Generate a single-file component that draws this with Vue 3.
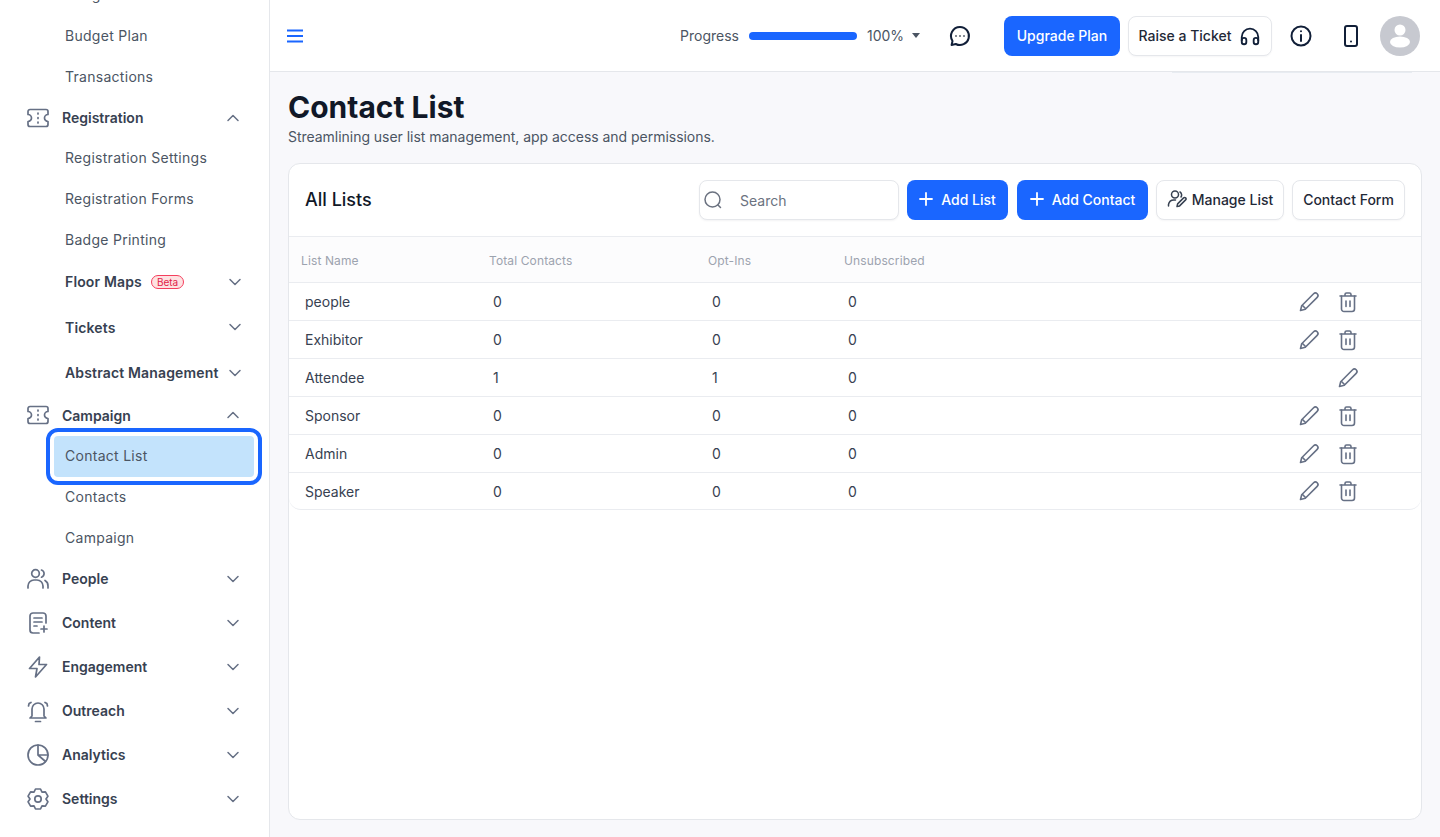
<template>
  <div class="layout">
    <aside class="sidebar">
      <nav class="nav">
        <a class="subItem">Budget Overview</a>
        <a class="subItem">Budget Plan</a>
        <a class="subItem">Transactions</a>

        <template v-for="group in groups" :key="group.label">
          <div class="groupRow">
            <svg class="groupIcon" viewBox="0 0 24 24" v-html="icons[group.icon]"></svg>
            <span class="groupLabel">{{ group.label }}</span>
            <svg class="chevron" :class="{ open: group.items }" viewBox="0 0 16 16">
              <path d="M3 5.500l5 5 5-5" />
            </svg>
          </div>
          <div v-if="group.items" class="subList">
            <template v-for="item in group.items" :key="item.label">
              <div v-if="item.nested" class="nestedRow">
                <span class="nestedLabel">{{ item.label }}</span>
                <span v-if="item.beta" class="beta">Beta</span>
                <svg class="chevron nestedChevron" viewBox="0 0 16 16">
                  <path d="M3 5.500l5 5 5-5" />
                </svg>
              </div>
              <a v-else class="subItem" :class="{ active: item.active }">{{ item.label }}</a>
            </template>
          </div>
        </template>
      </nav>
    </aside>

    <div class="main">
      <header class="topbar">
        <svg class="burger" viewBox="0 0 16 14">
          <path d="M0 1.500h16M0 7h16M0 12.500h16" />
        </svg>
        <div class="topRight">
          <span class="progressLabel">Progress</span>
          <div class="progressBar"></div>
          <span class="progressLabel percent">100%</span>
          <span class="caret"></span>
          <svg class="topIcon chat" viewBox="0 0 24 24">
            <path d="M12 3a9 9 0 1 1-4.200 17L3.600 21l.9-4A9 9 0 0 1 12 3z" />
            <path class="dots" d="M8 12h.01M12 12h.01M16 12h.01" />
          </svg>
          <button class="btn primary upgrade">Upgrade Plan</button>
          <button class="btn outline ticket">
            Raise a Ticket
            <svg class="headset" viewBox="0 0 24 24">
              <path d="M3 17v-4a9 9 0 0 1 18 0v4" />
              <rect x="3" y="14" width="5" height="7" rx="2.500" />
              <rect x="16" y="14" width="5" height="7" rx="2.500" />
            </svg>
          </button>
          <svg class="topIcon info" viewBox="0 0 24 24">
            <circle cx="12" cy="12" r="9.500" />
            <path d="M12 11v6M12 7.200v.1" />
          </svg>
          <svg class="topIcon phone" viewBox="0 0 24 24">
            <rect x="6" y="2" width="12" height="20" rx="2" />
            <path d="M12 17.500v.1" />
          </svg>
          <div class="avatar">
            <svg viewBox="0 0 40 40">
              <circle cx="20" cy="14" r="5.500" />
              <ellipse cx="20" cy="26" rx="10" ry="5.500" />
            </svg>
          </div>
        </div>
        <div class="hiddenStrip"></div>
      </header>

      <main class="content">
        <h1 class="title">Contact List</h1>
        <p class="subtitle">Streamlining user list management, app access and permissions.</p>

        <section class="card">
          <div class="cardHead">
            <h2 class="cardTitle">All Lists</h2>
            <div class="tools">
              <label class="search">
                <svg class="searchIcon" viewBox="0 0 20 20">
                  <circle cx="9.500" cy="9.500" r="7.500" />
                  <path d="M15 15l2.500 2.500" />
                </svg>
                <span class="searchText">Search</span>
              </label>
              <button class="btn primary addList">
                <svg class="plus" viewBox="0 0 14 14"><path d="M7 1v12M1 7h12" /></svg>
                Add List
              </button>
              <button class="btn primary addContact">
                <svg class="plus" viewBox="0 0 14 14"><path d="M7 1v12M1 7h12" /></svg>
                Add Contact
              </button>
              <button class="btn outline manage">
                <svg class="manageIcon" viewBox="0 0 20 20">
                  <circle cx="8" cy="5.500" r="3.500" />
                  <path d="M1.500 17v-1.500A5.500 5.500 0 0 1 7 11h1.500" />
                  <path d="M13 3a3.500 3.500 0 0 1 1 5" />
                  <path d="M10 17.500l.6-2.600 6-6a1.400 1.400 0 0 1 2 2l-6 6z" />
                </svg>
                Manage List
              </button>
              <button class="btn outline form">Contact Form</button>
            </div>
          </div>

          <div class="tableHead">
            <span v-for="col in columns" :key="col">{{ col }}</span>
          </div>
          <div v-for="row in rows" :key="row.name" class="tableRow">
            <span>{{ row.name }}</span>
            <span>{{ row.total }}</span>
            <span>{{ row.optIns }}</span>
            <span>{{ row.unsub }}</span>
            <div class="actions">
              <svg class="action" viewBox="0 0 24 24">
                <path d="M3.500 20.500l1.200-4.800L16.600 3.800a2.400 2.400 0 0 1 3.600 3.600L8.300 19.300z" />
                <path d="M5.500 15.500l3 3" />
              </svg>
              <svg v-if="!row.locked" class="action" viewBox="0 0 24 24">
                <path d="M4 6h16M9 6V4.500A1.500 1.500 0 0 1 10.500 3h3A1.500 1.500 0 0 1 15 4.500V6" />
                <path d="M5.500 6v13a2.500 2.500 0 0 0 2.500 2.500h8a2.500 2.500 0 0 0 2.500-2.500V6" />
                <path d="M10 11v5.500M14 11v5.500" />
              </svg>
            </div>
          </div>
        </section>
      </main>
    </div>
  </div>
</template>

<script setup>
const icons = {
  ticket: '<path d="M4 3.500h16a2 2 0 0 1 2 2v3a3.500 3.500 0 0 0 0 7v3a2 2 0 0 1-2 2H4a2 2 0 0 1-2-2v-3a3.500 3.500 0 0 0 0-7v-3a2 2 0 0 1 2-2z"/><path d="M12 7v1M12 11.500v1M12 16v1"/>',
  people: '<circle cx="9.500" cy="6.500" r="3.800"/><path d="M2 21v-2a6 6 0 0 1 6-6h3a6 6 0 0 1 6 6v2"/><path d="M15.500 3a3.800 3.800 0 0 1 0 7.200M19 13.500a6 6 0 0 1 3 5.500v2"/>',
  content: '<path d="M20 12V5a3 3 0 0 0-3-3H7a3 3 0 0 0-3 3v14a3 3 0 0 0 3 3h6"/><path d="M8 7h8M8 11h8M8 15h3M18 15v6M15 18h6"/>',
  bolt: '<path d="M13.500 2L3.500 13.500h7.500L9.500 22l11-12.500h-7.500z"/>',
  bell: '<path d="M6 17V10a6 6 0 0 1 12 0v7l2 2H4z"/><path d="M9.500 22.500h5M2.500 7l.6-2.500L5 3.500M21.500 7l-.6-2.500L19 3.500"/>',
  pie: '<circle cx="12" cy="12" r="10"/><path d="M12 2v10l7.500 6.500M12 12h10"/>',
  gear: '<path d="M9.500 2h5l1.500 3.070 3.410-.23 2.490 4.320L20 12l1.900 2.840-2.490 4.320-3.410-.23L14.500 22h-5L8 18.930l-3.410.23-2.490-4.320L4 12 2.100 9.160l2.490-4.320L8 5.070z"/><circle cx="12" cy="12" r="3.200"/>',
}

const groups = [
  {
    label: 'Registration',
    icon: 'ticket',
    items: [
      { label: 'Registration Settings' },
      { label: 'Registration Forms' },
      { label: 'Badge Printing' },
      { label: 'Floor Maps', nested: true, beta: true },
      { label: 'Tickets', nested: true },
      { label: 'Abstract Management', nested: true },
    ],
  },
  {
    label: 'Campaign',
    icon: 'ticket',
    items: [
      { label: 'Contact List', active: true },
      { label: 'Contacts' },
      { label: 'Campaign' },
    ],
  },
  { label: 'People', icon: 'people' },
  { label: 'Content', icon: 'content' },
  { label: 'Engagement', icon: 'bolt' },
  { label: 'Outreach', icon: 'bell' },
  { label: 'Analytics', icon: 'pie' },
  { label: 'Settings', icon: 'gear' },
]

const columns = ['List Name', 'Total Contacts', 'Opt-Ins', 'Unsubscribed']

const rows = [
  { name: 'people', total: 0, optIns: 0, unsub: 0 },
  { name: 'Exhibitor', total: 0, optIns: 0, unsub: 0 },
  { name: 'Attendee', total: 1, optIns: 1, unsub: 0, locked: true },
  { name: 'Sponsor', total: 0, optIns: 0, unsub: 0 },
  { name: 'Admin', total: 0, optIns: 0, unsub: 0 },
  { name: 'Speaker', total: 0, optIns: 0, unsub: 0 },
]
</script>

<style>
html, body {
  height: 100%;
  overflow: hidden;
}
</style>

<style scoped>
.layout {
  display: flex;
  height: 837px;
  overflow: hidden;
  font-family: Inter, "Liberation Sans", sans-serif;
  font-size: 14px;
  color: #111827;
}

/* sidebar */
.sidebar {
  width: 270px;
  flex: none;
  box-sizing: border-box;
  background: #fff;
  border-right: 1px solid #e5e7eb;
  overflow: hidden;
}

.nav {
  margin-top: -25.5px;
  padding: 0 26px;
}

.subItem {
  display: flex;
  align-items: center;
  box-sizing: border-box;
  height: 41px;
  margin: 0 -11px 0 28px;
  padding: 0 0 2px 11px;
  border-radius: 4px;
  color: #4b5563;
  letter-spacing: 0.28px;
}

.subItem.active {
  background: #c3e3fc;
  outline: 4px solid #1a66ff;
  outline-offset: 4px;
}

.groupRow {
  display: flex;
  align-items: center;
  height: 40px;
  margin-bottom: 4px;
}

.subList {
  margin-top: -3.5px;
}

.groupIcon {
  width: 24px;
  height: 24px;
  flex: none;
  fill: none;
  stroke: #667085;
  stroke-width: 1.7;
  stroke-linecap: round;
  stroke-linejoin: round;
}

.groupLabel {
  margin-left: 12px;
  flex: 1;
  font-weight: 600;
  color: #374151;
}

.chevron {
  width: 16px;
  height: 16px;
  margin-right: 2px;
  flex: none;
  fill: none;
  stroke: #667085;
  stroke-width: 1.5;
  stroke-linecap: round;
  stroke-linejoin: round;
}

.chevron.open {
  transform: rotate(180deg);
}

.nestedRow {
  display: flex;
  align-items: center;
  box-sizing: border-box;
  height: 42px;
  margin: 0 -2px 3.5px 39px;
  padding-bottom: 1px;
}

.nestedRow:last-child {
  margin-bottom: 1px;
}

.nestedLabel {
  font-weight: 600;
  color: #374151;
  letter-spacing: 0.15px;
}

.nestedChevron {
  margin-left: auto;
}

.beta {
  margin-left: 9px;
  padding: 0 5px;
  height: 14px;
  line-height: 12px;
  box-sizing: border-box;
  border: 1px solid #f43f5e;
  border-radius: 7px;
  background: #fee2e2;
  color: #e11d48;
  font-size: 10px;
}

/* topbar */
.main {
  flex: 1;
  min-width: 0;
  display: flex;
  flex-direction: column;
  background: #f8f8fb;
}

.topbar {
  position: relative;
  height: 72px;
  flex: none;
  box-sizing: border-box;
  display: flex;
  align-items: center;
  padding: 0 20px 0 17px;
  background: #fff;
  border-bottom: 1px solid #e5e7eb;
}

.hiddenStrip {
  position: absolute;
  left: 902px;
  right: 28px;
  bottom: -2px;
  height: 1px;
  background: #e8ecf1;
}

.burger {
  width: 16px;
  height: 14px;
  fill: none;
  stroke: #1a66ff;
  stroke-width: 2;
  stroke-linecap: round;
}

.topRight {
  margin-left: auto;
  display: flex;
  align-items: center;
}

.progressLabel {
  color: #4b5563;
}

.progressBar {
  width: 108px;
  height: 8px;
  margin: 0 10px;
  border-radius: 4px;
  background: #1a66ff;
}

.percent {
  width: 35px;
}

.caret {
  width: 0;
  height: 0;
  margin-left: 10px;
  border-left: 4.5px solid transparent;
  border-right: 4.5px solid transparent;
  border-top: 5px solid #4b5563;
}

.topIcon {
  width: 24px;
  height: 24px;
  flex: none;
  fill: none;
  stroke: #111f38;
  stroke-width: 2;
  stroke-linecap: round;
  stroke-linejoin: round;
}

.chat {
  margin-left: 28px;
}

.dots {
  stroke-width: 1.8;
  stroke: #4b5563;
}

.btn {
  display: flex;
  align-items: center;
  justify-content: center;
  box-sizing: border-box;
  height: 40px;
  padding: 0;
  border-radius: 8px;
  font: inherit;
  font-weight: 500;
  cursor: pointer;
}

.primary {
  background: #1a66ff;
  border: 0;
  color: #fff;
}

.outline {
  background: #fff;
  border: 1px solid #e5e7eb;
  color: #1f2937;
  box-shadow: 0 1px 2px rgba(16, 24, 40, 0.04);
}

.upgrade {
  width: 116px;
  margin-left: 32px;
  padding-bottom: 1px;
}

.ticket {
  width: 144px;
  margin-left: 8px;
  gap: 8px;
}

.headset {
  width: 22px;
  height: 22px;
  fill: none;
  stroke: #111f38;
  stroke-width: 2;
  stroke-linecap: round;
}

.info {
  margin-left: 17px;
}

.phone {
  margin-left: 26px;
}

.avatar {
  width: 40px;
  height: 40px;
  margin-left: 17px;
  border-radius: 50%;
  background: #c7c9d0;
}

.avatar svg {
  display: block;
  fill: #fff;
}

/* content */
.content {
  flex: 1;
  min-height: 0;
  display: flex;
  flex-direction: column;
  padding: 17px 18px;
}

.title {
  margin: 0;
  font-size: 30px;
  line-height: 36px;
  font-weight: 700;
  color: #111827;
}

.subtitle {
  margin: 2px 0 16px;
  line-height: 20px;
  color: #4b5563;
  letter-spacing: -0.03px;
}

.card {
  flex: 1;
  background: #fff;
  border: 1px solid #e5e7eb;
  border-radius: 12px;
}

.cardHead {
  display: flex;
  align-items: center;
  justify-content: space-between;
  height: 73px;
  box-sizing: border-box;
  padding: 0 16px;
  border-bottom: 1px solid #eaecf0;
}

.cardTitle {
  margin: 0 0 2px;
  font-size: 18px;
  font-weight: 500;
  color: #111827;
}

.tools {
  display: flex;
  align-items: center;
  gap: 8px;
}

.tools .btn {
  padding-bottom: 2px;
}

.search {
  display: flex;
  align-items: center;
  width: 200px;
  height: 40px;
  box-sizing: border-box;
  padding-left: 3px;
  background: #fff;
  border: 1px solid #e5e7eb;
  border-radius: 8px;
  box-shadow: 0 1px 2px rgba(16, 24, 40, 0.05);
}

.searchIcon {
  width: 20px;
  height: 20px;
  fill: none;
  stroke: #6b7280;
  stroke-width: 1.5;
  stroke-linecap: round;
}

.searchText {
  margin-left: 17px;
  color: #6b7280;
}

.plus {
  width: 14px;
  height: 14px;
  fill: none;
  stroke: #fff;
  stroke-width: 1.8;
  stroke-linecap: round;
}

.addList {
  width: 101px;
  gap: 8px;
}

.addContact {
  width: 131px;
  margin-left: 1px;
  gap: 8px;
}

.manage {
  width: 128px;
  gap: 5px;
}

.form {
  width: 113px;
}

.manageIcon {
  width: 20px;
  height: 20px;
  fill: none;
  stroke: #374151;
  stroke-width: 1.5;
  stroke-linecap: round;
  stroke-linejoin: round;
}

.tableHead,
.tableRow {
  display: grid;
  grid-template-columns: 188px 219px 136px 1fr 100px;
}

.tableHead {
  height: 46px;
  box-sizing: border-box;
  align-items: center;
  padding: 2px 0 0 12px;
  background: #fcfcfd;
  border-bottom: 1px solid #eaecf0;
  font-size: 12px;
  color: #9ca3af;
  letter-spacing: 0.12px;
}

.tableRow {
  height: 38px;
  box-sizing: border-box;
  align-items: center;
  padding-left: 16px;
  color: #374151;
  border-bottom: 1px solid #eaecf0;
}

.tableRow:last-child {
  height: 37px;
  border-radius: 0 0 12px 12px;
}

.actions {
  display: flex;
  justify-content: flex-end;
  gap: 15px;
  width: 100px;
  margin-left: -61px;
}

.action {
  width: 24px;
  height: 24px;
  fill: none;
  stroke: #667085;
  stroke-width: 1.6;
  stroke-linecap: round;
  stroke-linejoin: round;
}
</style>
